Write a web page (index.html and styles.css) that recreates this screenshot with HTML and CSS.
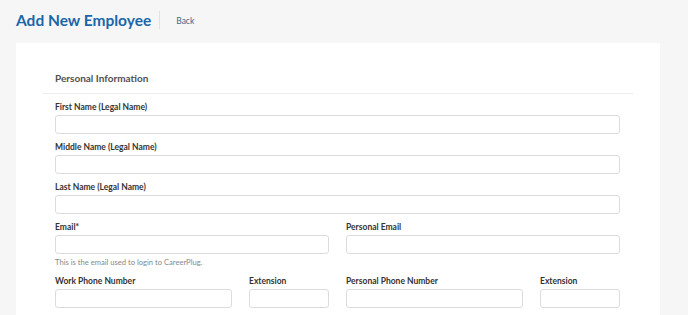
FILE: index.html
```html
<!DOCTYPE html>
<html lang="en">
<head>
    <meta charset="UTF-8">
    <meta name="viewport" content="width=device-width, initial-scale=1.0">
    <title>Add New Employee</title>
    <link rel="stylesheet" href="styles.css">
</head>
<body>
    <div class="page-header">
        <h1>Add New Employee</h1>
        <a href="#" class="back-link">Back</a>
    </div>

    <div class="card">
        <div class="section">
            <h2>Personal Information</h2>

            <div class="fields">
                <div class="field">
                    <label>First Name (Legal Name)</label>
                    <input type="text">
                </div>
                <div class="field">
                    <label>Middle Name (Legal Name)</label>
                    <input type="text">
                </div>
                <div class="field">
                    <label>Last Name (Legal Name)</label>
                    <input type="text">
                </div>

                <div class="row">
                    <div class="field">
                        <label>Email*</label>
                        <input type="email">
                        <p class="help">This is the email used to login to CareerPlug.</p>
                    </div>
                    <div class="field">
                        <label>Personal Email</label>
                        <input type="email">
                    </div>
                </div>

                <div class="row">
                    <div class="phone">
                        <div class="field">
                            <label>Work Phone Number</label>
                            <input type="tel">
                        </div>
                        <div class="field">
                            <label>Extension</label>
                            <input type="text">
                        </div>
                    </div>
                    <div class="phone">
                        <div class="field">
                            <label>Personal Phone Number</label>
                            <input type="tel">
                        </div>
                        <div class="field">
                            <label>Extension</label>
                            <input type="text">
                        </div>
                    </div>
                </div>
            </div>
        </div>
    </div>
</body>
</html>
```

FILE: styles.css
```css
body {
    margin: 0;
    padding: 0 16px;
    background-color: #f6f6f6;
    font-family: Lato, "Open Sans", sans-serif;
    color: #333;
}
.page-header {
    display: flex;
    align-items: center;
    height: 43px;
}
.page-header h1 {
    margin: 0;
    font-size: 15.5px;
    font-weight: 700;
    color: #1a66a8;
    padding-right: 8px;
    border-right: 1px solid #e2e2e2;
    line-height: 18px;
    margin-top: -4px;
}
.back-link {
    margin-left: 16px;
    margin-top: -2px;
    font-size: 8.5px;
    color: #3d6591;
    text-decoration: none;
}
.card {
    background-color: white;
    width: 644px;
    min-height: 272px;
    padding: 0 27px 0 26px;
    box-sizing: border-box;
}
.section h2 {
    margin: 0;
    padding: 29px 13px 8px;
    font-size: 10px;
    font-weight: 700;
    color: #505050;
    line-height: 13px;
    border-bottom: 1px solid #eee;
}
.fields {
    padding: 7px 13px 0;
}
.field {
    display: flex;
    flex-direction: column;
    margin-bottom: 7px;
    min-width: 0;
}
.field label {
    font-size: 8.5px;
    font-weight: 700;
    line-height: 12px;
    margin-bottom: 2px;
    color: #333;
}
.field input {
    width: 100%;
    height: 19px;
    box-sizing: border-box;
    border: 1px solid #dcdcdc;
    border-radius: 3px;
    margin: 0;
    padding: 0 6px;
    font-family: inherit;
}
.help {
    margin: 2px 0 0;
    font-size: 7.6px;
    line-height: 12px;
    color: #888;
}
.row {
    display: grid;
    grid-template-columns: minmax(0, 1fr) minmax(0, 1fr);
    gap: 17px;
}
.phone {
    display: grid;
    grid-template-columns: minmax(0, 1fr) 80px;
    gap: 17px;
}
```
